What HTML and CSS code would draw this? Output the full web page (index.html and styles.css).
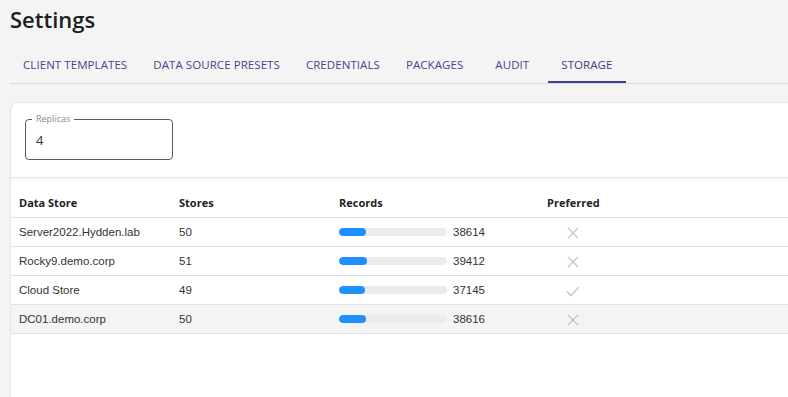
FILE: index.html
```html
<!DOCTYPE html>
<html>
<head>
<meta charset="utf-8">
<link rel="stylesheet" href="styles.css">
</head>
<body>
<div class="page">
  <h1 class="title">Settings</h1>
  <nav class="tabs">
    <div class="tab">CLIENT TEMPLATES</div>
    <div class="tab">DATA SOURCE PRESETS</div>
    <div class="tab">CREDENTIALS</div>
    <div class="tab">PACKAGES</div>
    <div class="tab">AUDIT</div>
    <div class="tab active">STORAGE</div>
  </nav>
  <section class="card">
    <div class="card-top">
      <div class="field">
        <span class="field-label">Replicas</span>
        <span class="field-value">4</span>
      </div>
    </div>
    <table class="grid">
      <thead>
        <tr>
          <th class="c-name">Data Store</th>
          <th class="c-stores">Stores</th>
          <th class="c-records">Records</th>
          <th class="c-pref">Preferred</th>
          <th class="c-rest"></th>
        </tr>
      </thead>
      <tbody>
        <tr>
          <td>Server2022.Hydden.lab</td>
          <td>50</td>
          <td><div class="rec"><div class="bar"><div class="fill" style="width:27px"></div></div><span>38614</span></div></td>
          <td><div class="icon-box"><svg width="12" height="12" viewBox="0 0 12 12"><path d="M1 1L11 11M11 1L1 11" stroke="#c6c6c6" stroke-width="1.4" fill="none"/></svg></div></td>
          <td></td>
        </tr>
        <tr>
          <td>Rocky9.demo.corp</td>
          <td>51</td>
          <td><div class="rec"><div class="bar"><div class="fill" style="width:28px"></div></div><span>39412</span></div></td>
          <td><div class="icon-box"><svg width="12" height="12" viewBox="0 0 12 12"><path d="M1 1L11 11M11 1L1 11" stroke="#c6c6c6" stroke-width="1.4" fill="none"/></svg></div></td>
          <td></td>
        </tr>
        <tr>
          <td>Cloud Store</td>
          <td>49</td>
          <td><div class="rec"><div class="bar"><div class="fill" style="width:26px"></div></div><span>37145</span></div></td>
          <td><div class="icon-box"><svg width="14" height="12" viewBox="0 0 14 12"><path d="M1 6.5L5 10.5L13 2" stroke="#c6c6c6" stroke-width="1.3" fill="none"/></svg></div></td>
          <td></td>
        </tr>
        <tr class="hover">
          <td>DC01.demo.corp</td>
          <td>50</td>
          <td><div class="rec"><div class="bar"><div class="fill" style="width:27px"></div></div><span>38616</span></div></td>
          <td><div class="icon-box"><svg width="12" height="12" viewBox="0 0 12 12"><path d="M1 1L11 11M11 1L1 11" stroke="#c6c6c6" stroke-width="1.4" fill="none"/></svg></div></td>
          <td></td>
        </tr>
      </tbody>
    </table>
  </section>
</div>
</body>
</html>
```

FILE: styles.css
```css
html, body {
  margin: 0;
  padding: 0;
  background: #f4f4f4;
  overflow: hidden;
  height: 397px;
}
.page {
  padding-left: 10px;
  font-family: "Open Sans", sans-serif;
}
.title {
  margin: 0;
  padding-top: 4px;
  font-size: 22px;
  line-height: 30px;
  font-weight: 600;
  color: #1e1e1e;
}
.tabs {
  display: flex;
  margin-top: 11px;
  border-bottom: 1px solid #d9d9d9;
}
.tab {
  position: relative;
  height: 38px;
  line-height: 40px;
  padding: 0 13px;
  min-width: 72px;
  box-sizing: border-box;
  text-align: center;
  font-size: 11.5px;
  letter-spacing: 0.07px;
  color: #45458f;
}
.tab.active {
  color: #3d3d85;
}
.tab.active::after {
  content: "";
  position: absolute;
  left: 0;
  right: 0;
  bottom: 0;
  height: 2px;
  background: #3f4198;
}
.card {
  margin-top: 18px;
  margin-right: -20px;
  background: #fff;
  border: 1px solid #e6e6e6;
  border-radius: 8px 8px 0 0;
  height: 320px;
}
.card-top {
  padding: 16px 14px 17px;
  border-bottom: 1px solid #e8e8e8;
  box-shadow: 0 2px 3px rgba(0,0,0,0.04);
}
.field {
  position: relative;
  width: 148px;
  height: 41px;
  box-sizing: border-box;
  border: 1px solid #5a5a5a;
  border-radius: 4px;
  display: flex;
  align-items: center;
  padding-left: 10px;
  padding-top: 1px;
}
.field-label {
  position: absolute;
  top: -7px;
  left: 6px;
  padding: 0 4px;
  background: #fff;
  font-size: 9px;
  line-height: 12px;
  color: #8a8a8a;
}
.field-value {
  font-size: 13px;
  color: #333;
}
.grid {
  border-collapse: collapse;
  width: 100%;
}
.grid th {
  text-align: left;
  font-weight: 700;
  font-size: 11px;
  line-height: 15px;
  color: #222;
  padding: 17px 8px 7px;
  border-bottom: 1px solid #e0e0e0;
}
.grid td {
  font-family: "Liberation Sans", Arial, sans-serif;
  font-size: 11.5px;
  color: #333;
  height: 28px;
  padding: 0 8px;
  border-bottom: 1px solid #e0e0e0;
}
.grid tr.hover td {
  background: #f4f4f4;
}
.c-name, .c-stores { width: 144px; }
.c-records { width: 192px; }
.c-pref { width: 53px; }
.rec {
  display: flex;
  align-items: center;
  gap: 6px;
}
.bar {
  width: 108px;
  height: 8px;
  border-radius: 4px;
  background: #ececec;
  overflow: hidden;
}
.fill {
  height: 100%;
  background: #1e8fff;
  border-radius: 4px;
}
.icon-box {
  width: 51px;
  display: flex;
  justify-content: center;
  align-items: center;
  padding-top: 1px;
}
.icon-box svg { display: block; }
```
